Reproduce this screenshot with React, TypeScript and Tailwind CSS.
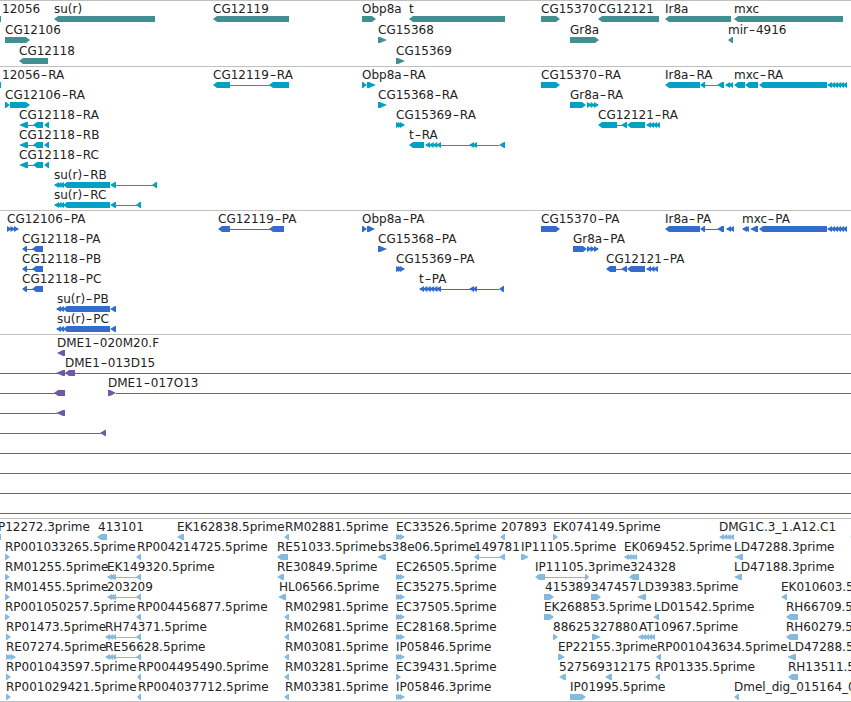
type Part = ["l" | "r" | "n" | "cl" | "cr", number, number];
type Feature = [string, number, Part[]];
type Row = [number, Feature[]];

const L = (a: number, b: number): Part => ["l", a, b];
const R = (a: number, b: number): Part => ["r", a, b];
const N = (a: number, b: number): Part => ["n", a, b];
const CL = (a: number, b: number): Part => ["cl", a, b];
const CR = (a: number, b: number): Part => ["cr", a, b];

const genes: Row[] = [
  [19, [
    ["12056", 2, [L(-5, 1)]],
    ["su(r)", 54, [L(54, 155)]],
    ["CG12119", 213, [L(213, 289)]],
    ["Obp8a", 362, [R(362, 376)]],
    ["t", 409, [L(409, 505)]],
    ["CG15370", 541, [R(541, 560)]],
    ["CG12121", 598, [L(598, 659)]],
    ["Ir8a", 665, [L(665, 731)]],
    ["mxc", 734, [L(734, 843)]],
  ]],
  [40, [
    ["CG12106", 5, [R(5, 30)]],
    ["CG15368", 378, [R(378, 387)]],
    ["Gr8a", 570, [R(570, 599)]],
    ["mir-4916", 728, [L(728, 733)]],
  ]],
  [61, [
    ["CG12118", 19, [L(19, 48)]],
    ["CG15369", 396, [R(396, 405)]],
  ]],
];

const cg12118ra: Part[] = [L(19, 28), N(28, 34), L(33, 43), L(44, 49)];

const transcripts: Row[] = [
  [85, [
    ["12056-RA", 2, [L(-5, 1)]],
    ["CG12119-RA", 213, [L(213, 230), N(230, 270), L(269, 289)]],
    ["Obp8a-RA", 362, [R(362, 367), R(367, 376)]],
    ["CG15370-RA", 541, [R(541, 560)]],
    ["Ir8a-RA", 665, [L(665, 700), L(700, 705), N(705, 718), L(717, 724), CL(725, 733)]],
    ["mxc-RA", 734, [L(734, 745), L(745, 758), L(759, 827), CL(827, 847)]],
  ]],
  [105, [
    ["CG12106-RA", 5, [R(5, 10), R(10, 30)]],
    ["CG15368-RA", 378, [R(378, 387)]],
    ["Gr8a-RA", 570, [R(570, 586), CR(587, 599)]],
  ]],
  [125, [
    ["CG12118-RA", 19, cg12118ra],
    ["CG15369-RA", 396, [CR(396, 405)]],
    ["CG12121-RA", 598, [L(598, 617), N(617, 622), L(621, 627), L(627, 645), CL(646, 660)]],
  ]],
  [145, [
    ["CG12118-RB", 19, cg12118ra],
    ["t-RA", 409, [L(409, 424), CL(425, 441), N(441, 470), CL(469, 477), N(477, 499), L(499, 505)]],
  ]],
  [165, [["CG12118-RC", 19, cg12118ra]]],
  [185, [["su(r)-RB", 54, [CL(54, 64), L(63, 110), L(110, 116), N(116, 153), L(152, 157)]]]],
  [205, [["su(r)-RC", 54, [CL(54, 64), L(63, 110), L(110, 116), N(116, 137), L(136, 141)]]]],
];

const cg12118pa: Part[] = [L(22, 27), N(27, 33), L(32, 43)];

const proteins: Row[] = [
  [229, [
    ["CG12106-PA", 7, [CR(7, 19)]],
    ["CG12119-PA", 218, [L(218, 230), N(230, 270), L(269, 284)]],
    ["Obp8a-PA", 362, [R(362, 367), R(367, 375)]],
    ["CG15370-PA", 541, [R(541, 560)]],
    ["Ir8a-PA", 665, [L(665, 700), L(700, 705), N(705, 718), L(717, 724), CL(726, 734)]],
    ["mxc-PA", 742, [CL(742, 749), L(750, 758), L(759, 827), CL(827, 847)]],
  ]],
  [249, [
    ["CG12118-PA", 22, cg12118pa],
    ["CG15368-PA", 378, [R(378, 387)]],
    ["Gr8a-PA", 573, [R(573, 587), CR(587, 599)]],
  ]],
  [269, [
    ["CG12118-PB", 22, cg12118pa],
    ["CG15369-PA", 396, [CR(396, 405)]],
    ["CG12121-PA", 606, [L(606, 616), N(616, 622), L(621, 627), L(627, 645), CL(646, 658)]],
  ]],
  [289, [
    ["CG12118-PC", 22, cg12118pa],
    ["t-PA", 419, [CL(419, 441), N(441, 470), CL(469, 477), N(477, 499), L(499, 504)]],
  ]],
  [309, [["su(r)-PB", 57, [CL(56, 64), L(63, 110), L(110, 116)]]]],
  [329, [["su(r)-PC", 57, [CL(56, 64), L(63, 110), L(110, 116)]]]],
];

const clones: Row[] = [
  [353, [["DME1-020M20.F", 57, [L(57, 65)]]]],
  [373, [["DME1-013D15", 65, [N(0, 851), L(56, 65), L(65, 75)]]]],
  [393, [
    ["", 0, [N(0, 56), L(54, 65)]],
    ["DME1-017O13", 108, [R(108, 116), N(116, 851)]],
  ]],
  [413, [["", 0, [N(0, 57), L(56, 65)]]]],
  [433, [["", 0, [N(0, 101), L(100, 106)]]]],
  [453, [["", 0, [N(0, 851)]]]],
  [473, [["", 0, [N(0, 851)]]]],
  [493, [["", 0, [N(0, 851)]]]],
  [513, [["", 0, [N(0, 851)]]]],
];

const reads: Row[] = [
  [537, [
    ["P12272.3prime", -2, [L(-5, 1)]],
    ["413101", 98, [L(97, 107)]],
    ["EK162838.5prime", 177, [L(177, 184)]],
    ["RM02881.5prime", 285, [L(284, 289)]],
    ["EC33526.5prime", 396, [CR(396, 405)]],
    ["207893", 501, [L(500, 505)]],
    ["EK074149.5prime", 553, [R(553, 558)]],
    ["DMG1C.3_1.A12.C1", 719, [CL(719, 734)]],
    ["", 0, [L(850, 856)]],
  ]],
  [557, [
    ["RP001033265.5prime", 5, [R(5, 10)]],
    ["RP004214725.5prime", 137, [L(136, 141)]],
    ["RE51033.5prime", 277, [L(277, 288)]],
    ["bs38e06.5prime", 378, [L(377, 386)]],
    ["149781", 474, [L(474, 479), N(479, 500), L(499, 505)]],
    ["IP11105.5prime", 521, [R(521, 529)]],
    ["EK069452.5prime", 624, [CL(624, 637)]],
    ["LD47288.3prime", 734, [L(734, 743)]],
  ]],
  [577, [
    ["RM01255.5prime", 5, [R(5, 10)]],
    ["EK149320.5prime", 107, [CL(107, 116), N(116, 137), L(136, 141)]],
    ["RE30849.5prime", 277, [L(277, 284)]],
    ["EC26505.5prime", 396, [CR(396, 405)]],
    ["IP11105.3prime", 535, [L(535, 545), N(545, 586), R(585, 589)]],
    ["324328", 630, [L(629, 639)]],
    ["LD47188.3prime", 734, [L(734, 742)]],
  ]],
  [597, [
    ["RM01455.5prime", 5, [R(5, 10)]],
    ["203209", 107, [CL(107, 116), N(116, 137), L(136, 141)]],
    ["HL06566.5prime", 279, [L(278, 286)]],
    ["EC35275.5prime", 396, [CR(396, 405)]],
    ["415389", 545, [R(544, 554)]],
    ["347457", 591, [R(591, 601)]],
    ["LD39383.5prime", 638, [L(637, 646)]],
    ["EK010603.5prime", 781, [L(781, 787)]],
  ]],
  [617, [
    ["RP001050257.5prime", 5, [R(5, 10)]],
    ["RP004456877.5prime", 137, [L(136, 141)]],
    ["RM02981.5prime", 285, [L(284, 289)]],
    ["EC37505.5prime", 396, [CR(396, 405)]],
    ["EK268853.5prime", 544, [R(544, 554)]],
    ["LD01542.5prime", 654, [L(653, 659)]],
    ["RH66709.5prime", 786, [L(786, 798)]],
  ]],
  [637, [
    ["RP01473.5prime", 6, [R(6, 11)]],
    ["RH74371.5prime", 105, [CL(105, 116), N(116, 137), L(136, 141)]],
    ["RM02681.5prime", 285, [L(284, 289)]],
    ["EC28168.5prime", 396, [CR(396, 405)]],
    ["88625", 553, [R(553, 558)]],
    ["327880", 592, [R(592, 601)]],
    ["AT10967.5prime", 639, [CL(638, 655)]],
    ["RH60279.5prime", 786, [L(786, 798)]],
  ]],
  [657, [
    ["RE07274.5prime", 6, [CR(6, 16)]],
    ["RE56628.5prime", 105, [CL(105, 116), N(116, 137), L(136, 141)]],
    ["RM03081.5prime", 285, [L(284, 289)]],
    ["IP05846.5prime", 396, [CR(396, 405)]],
    ["EP22155.3prime", 558, [R(558, 565)]],
    ["RP001043634.5prime", 657, [L(656, 661)]],
    ["LD47288.5prime", 788, [L(787, 796)]],
  ]],
  [677, [
    ["RP001043597.5prime", 6, [R(6, 11)]],
    ["RP004495490.5prime", 138, [L(137, 141)]],
    ["RM03281.5prime", 285, [L(284, 289)]],
    ["EC39431.5prime", 396, [R(396, 401)]],
    ["527569", 559, [L(559, 566)]],
    ["312175", 605, [L(605, 612)]],
    ["RP01335.5prime", 655, [L(655, 660)]],
    ["RH13511.5prime", 788, [L(788, 798)]],
  ]],
  [697, [
    ["RP001029421.5prime", 6, [R(6, 11)]],
    ["RP004037712.5prime", 138, [L(137, 141)]],
    ["RM03381.5prime", 285, [L(284, 289)]],
    ["IP05846.3prime", 396, [CR(396, 405)]],
    ["IP01995.5prime", 570, [R(570, 586)]],
    ["Dmel_dig_015164_0", 734, [L(734, 739)]],
  ]],
];

function Glyph({ part, c }: { part: Part; c: number }) {
  const [kind, a, b] = part;
  const w = b - a;
  if (kind === "n") return <rect x={a} y={c} width={w} height={1} />;
  if (kind === "cl" || kind === "cr") {
    // run of small overlapping arrowheads on a thin core
    const n = Math.max(2, Math.round(w / 3.6));
    const step = (w - 5) / (n - 1);
    return (
      <>
        <rect x={a + 1} y={c - 1} width={w - 2} height={2} />
        {Array.from({ length: n }, (_, i) => {
          const x = a + i * step;
          const pts =
            kind === "cl"
              ? `${x},${c} ${x + 5},${c - 3} ${x + 5},${c + 3}`
              : `${x + 5},${c} ${x},${c - 3} ${x},${c + 3}`;
          return <polygon key={i} points={pts} />;
        })}
      </>
    );
  }
  const tip = w <= 6 ? w - 1 : w <= 9 ? w - 2 : 4;
  const pts =
    kind === "l"
      ? `${a},${c} ${a + tip},${c - 3} ${b},${c - 3} ${b},${c + 3} ${a + tip},${c + 3}`
      : `${b},${c} ${b - tip},${c - 3} ${a},${c - 3} ${a},${c + 3} ${b - tip},${c + 3}`;
  return <polygon points={pts} />;
}

function Label({ text, x, top }: { text: string; x: number; top: number }) {
  const chunks = text.split("-");
  return (
    <span
      className="absolute whitespace-nowrap text-[12px] leading-[14px] text-[#222]"
      style={{ left: x, top }}
    >
      {chunks.map((chunk, i) => (
        <span key={i}>
          {i > 0 && <span className="inline-block w-[8px] text-center scale-x-[1.5]">-</span>}
          {chunk}
        </span>
      ))}
    </span>
  );
}

function Track({ top, h, fill, rows }: { top: number; h: string; fill: string; rows: Row[] }) {
  const origin = top + 1;
  return (
    <div className={`relative shrink-0 border-t border-[#c0c0c0] ${h}`}>
      <svg className={`absolute left-0 top-0 w-[851px] h-full overflow-visible ${fill}`}>
        <g transform={`translate(0 ${-origin})`}>
          {rows.map(([c, items]) =>
            items.map(([, , parts], i) =>
              parts.map((p, j) => <Glyph key={`${c}-${i}-${j}`} part={p} c={c} />)
            )
          )}
        </g>
      </svg>
      {rows.map(([c, items]) =>
        items.map(([text, x], i) =>
          text ? <Label key={`${c}-${i}`} text={text} x={x} top={c - 17 - origin} /> : null
        )
      )}
    </div>
  );
}

export default function App() {
  return (
    <div className="flex h-[702px] w-[851px] flex-col overflow-hidden bg-white font-['DejaVu_Sans',sans-serif]">
      <Track top={0} h="h-[66px]" fill="fill-[#428f92]" rows={genes} />
      <Track top={66} h="h-[144px]" fill="fill-[#02a0c3]" rows={transcripts} />
      <Track top={210} h="h-[124px]" fill="fill-[#336ccc]" rows={proteins} />
      <Track top={334} h="h-[184px]" fill="fill-[#6f58a6]" rows={clones} />
      <Track top={518} h="h-[183px]" fill="fill-[#85badf]" rows={reads} />
      <div className="h-px shrink-0 bg-[#c0c0c0]" />
    </div>
  );
}
